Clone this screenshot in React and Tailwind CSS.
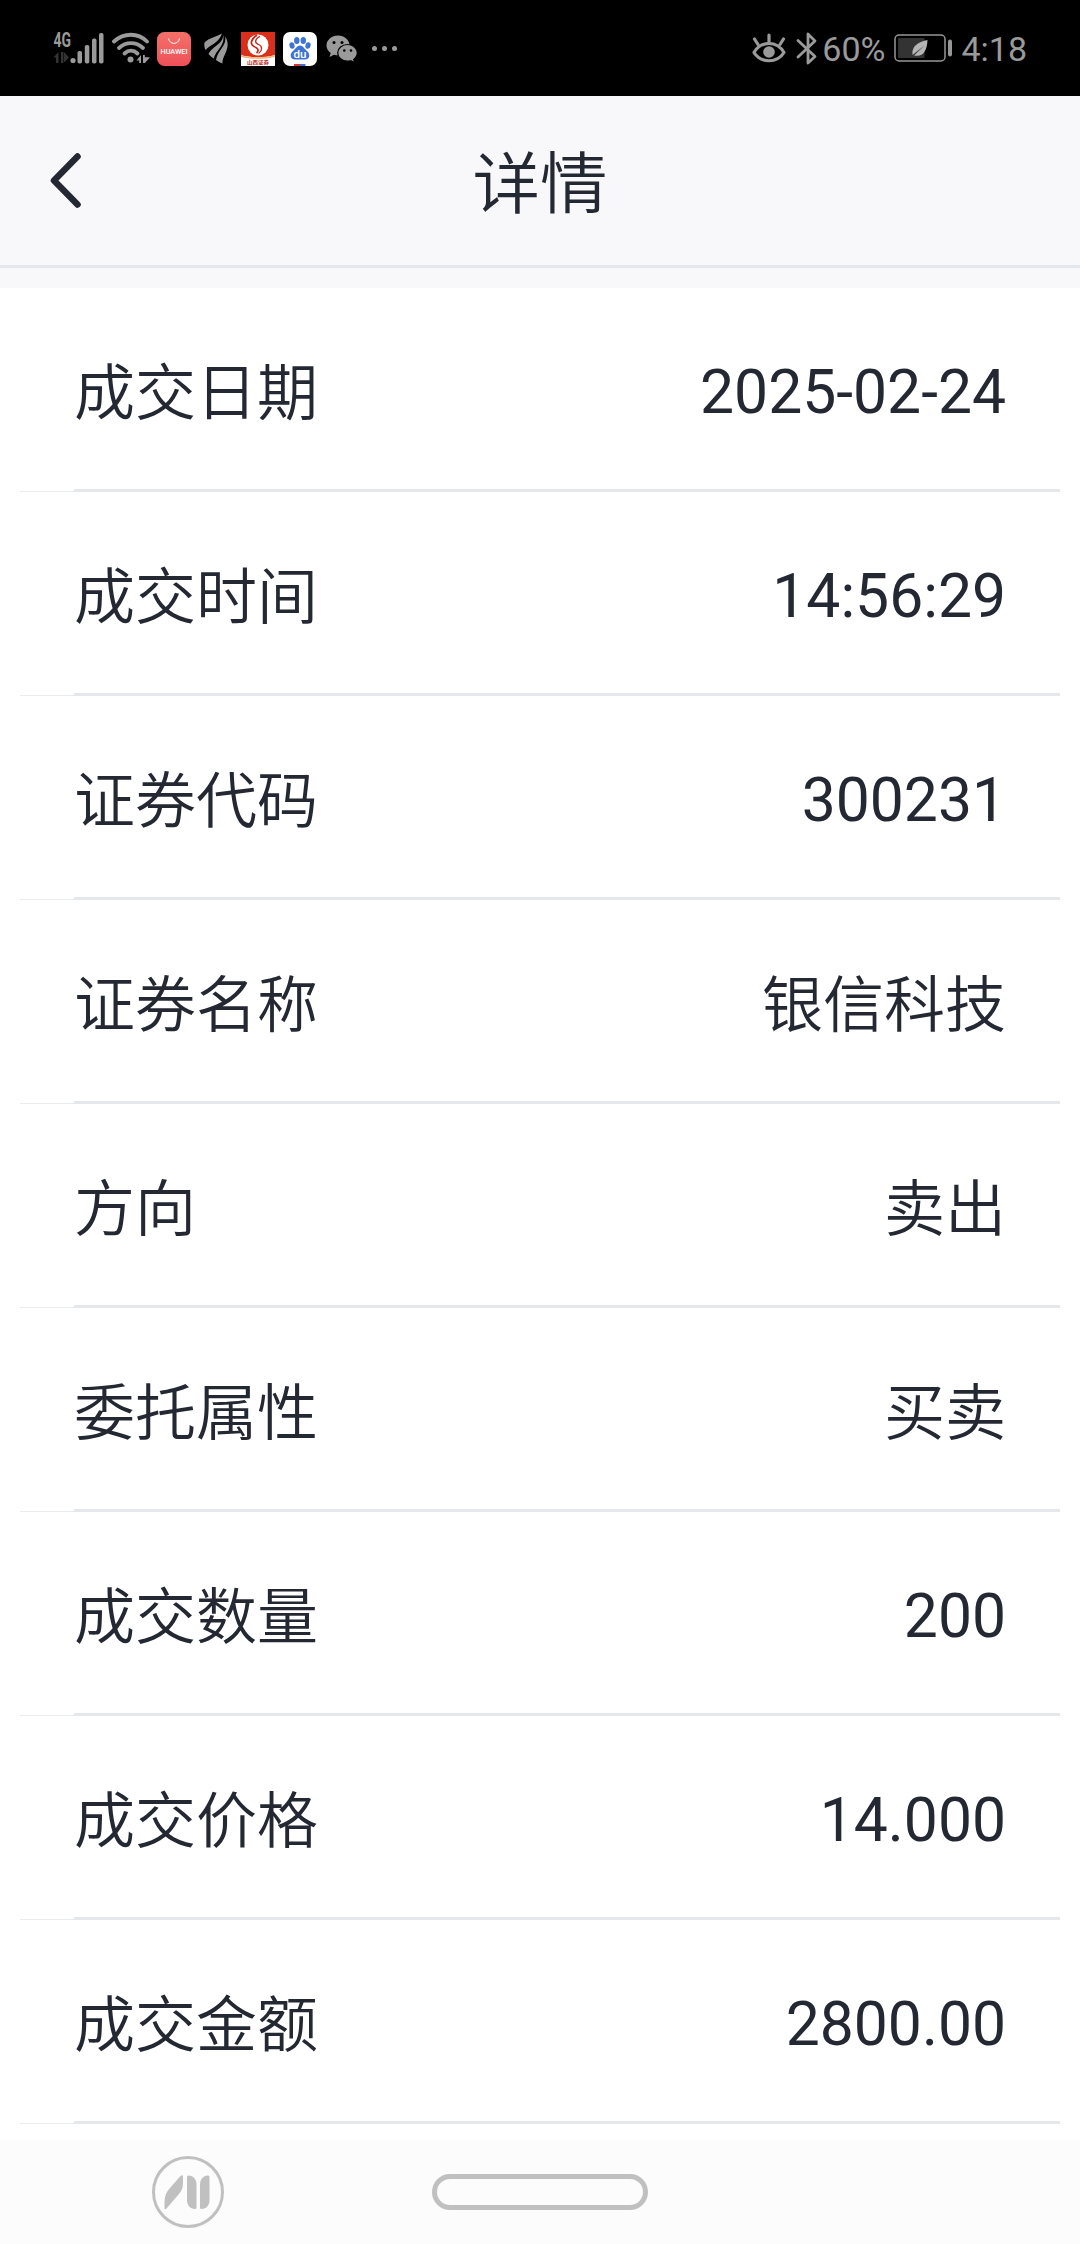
import React from 'react';

const rows = [
    { label: '成交日期', value: '2025-02-24' },
    { label: '成交时间', value: '14:56:29' },
    { label: '证券代码', value: '300231' },
    { label: '证券名称', value: '银信科技' },
    { label: '方向', value: '卖出' },
    { label: '委托属性', value: '买卖' },
    { label: '成交数量', value: '200' },
    { label: '成交价格', value: '14.000' },
    { label: '成交金额', value: '2800.00' },
];

const SignalIcon = () => (
    <svg width="52" height="40" viewBox="0 0 52 40" fill="#9a9a9a">
        <text x="0.5" y="18.500" fontSize="19.500" fontWeight="700" textLength="17.500" lengthAdjust="spacingAndGlyphs">4G</text>
        <path d="M0.500 29.500 5.500 24v11H3v-5.500zM8 24h2.400v11H8zM11 24l5 5.500-5 5z" fill="#333" />
        <circle cx="20" cy="32.500" r="2.600" />
        <rect x="24.500" y="23" width="4.500" height="12.500" rx="1.800" />
        <rect x="31.800" y="17" width="4.500" height="18.500" rx="1.800" />
        <rect x="39" y="10.500" width="4.500" height="25" rx="1.800" />
        <rect x="46" y="5" width="4.500" height="30.500" rx="1.800" />
    </svg>
);

const WifiIcon = () => (
    <svg width="38" height="40" viewBox="0 0 38 40" fill="none" stroke="#9a9a9a" strokeWidth="3.800" strokeLinecap="round">
        <path d="M2 13.500C12 4.500 26 4.500 35 13.500" />
        <path d="M7 20c7-6.500 17-6.500 24 0" />
        <path d="M12.500 25.500c4-3.800 9-3.800 13 0" />
        <circle cx="18.500" cy="31.500" r="3" fill="#9a9a9a" stroke="none" />
        <path d="M24.500 32.500 29 27v8h-1.800v-2.500zM31 27h1.800v2.200H38L33 35h-2z" fill="#9a9a9a" stroke="none" />
    </svg>
);

const HuaweiIcon = () => (
    <svg width="34" height="34" viewBox="0 0 34 34">
        <defs>
            <linearGradient id="hw" x1="0" y1="0" x2="0" y2="1">
                <stop offset="0" stopColor="#f47068" />
                <stop offset="1" stopColor="#ef5159" />
            </linearGradient>
        </defs>
        <rect width="34" height="34" rx="7.500" fill="url(#hw)" />
        <path d="M11.500 6.500c1 6.500 10 6.500 11 0" fill="none" stroke="#fff" strokeWidth="1" />
        <text x="3.500" y="22" fontSize="6.500" fontWeight="500" fill="#fff" textLength="27" lengthAdjust="spacingAndGlyphs">HUAWEI</text>
    </svg>
);

const WingIcon = () => (
    <svg width="26" height="40" viewBox="0 0 26 40" fill="#9a9a9a">
        <path d="M18 5.500C13 8.500 5 10 .5 14.500c-.5 3 0 5 1 7.500C5 17.500 15 15 18 5.500z" />
        <path d="M19 6.500c1 9-10 11-14.500 19.500C6.500 28 8 29.500 10 30.500 11 23 22 17 19 6.500z" />
        <path d="M21 8c2.500 9.500-7.500 14-9 24 2 1.500 4 2.500 6.500 3.500C17.500 28 28.500 20 21 8z" />
    </svg>
);

const BrokerIcon = () => (
    <svg width="34" height="34" viewBox="0 0 34 34">
        <rect width="34" height="34" fill="#fff" />
        <path d="M0 0h34v23c-10 3-24 3-34 0z" fill="#d9301c" />
        <path d="M0 23c10 3 24 3 34 0v2c-10 2.500-24 2.500-34 0z" fill="#f0b77a" />
        <circle cx="17" cy="13" r="10.500" fill="#fff" />
        <g fill="none" stroke="#c4281b" strokeLinecap="round">
            <path d="M15.500 3.500C9.500 7.500 9 12.500 13 14.500c4 1.500 5 3.500 3 6" strokeWidth="1.700" />
            <path d="M18.500 4.500c-5 3-5 6.500-1 8 4 1.500 4 6 .5 8.500" strokeWidth="1.300" />
        </g>
        <text x="6" y="32" fontSize="5" fontWeight="700" fill="#b3261b" textLength="22" lengthAdjust="spacingAndGlyphs">山西证券</text>
    </svg>
);

const BaiduIcon = () => (
    <svg width="34" height="34" viewBox="0 0 34 34">
        <rect width="34" height="34" rx="7" fill="#fff" />
        <g fill="#3d74d6">
            <ellipse cx="9" cy="13.500" rx="2.600" ry="3.300" transform="rotate(-12 9 13.500)" />
            <ellipse cx="13.800" cy="8.500" rx="2.700" ry="3.600" />
            <ellipse cx="20.300" cy="8.500" rx="2.700" ry="3.600" />
            <ellipse cx="25" cy="13.500" rx="2.600" ry="3.300" transform="rotate(12 25 13.500)" />
            <path d="M17 13.500c-3 0-4.500 3.500-7 5.500-4 3.500-2.500 8.500 2 8.500h10c4.500 0 6-5 2-8.500-2.500-2-4-5.500-7-5.500z" />
            <path d="M17 32h5.500v2H17z" />
        </g>
        <path d="M11 32h6v2h-6z" fill="#d33" />
        <text x="10.500" y="25.800" fontSize="11" fontWeight="500" fill="#fff" textLength="13" lengthAdjust="spacingAndGlyphs">du</text>
    </svg>
);

const WechatIcon = () => (
    <svg width="33" height="40" viewBox="0 0 33 40">
        <path d="M12 7.500C5.500 7.500.5 12 .5 17.500c0 3 1.700 5.800 4.200 7.600L3.500 29l4.600-2.300c1.300.4 2.500.6 3.900.6 6.500 0 11.500-4.500 11.500-9.900S18.500 7.500 12 7.500z" fill="#9a9a9a" />
        <path d="M21.500 16.500c-5.500 0-9.800 3.800-9.800 8.300s4.300 8.400 9.800 8.400c1.200 0 2.300-.2 3.300-.5l3.900 2-1-3.300c2.200-1.600 3.600-3.900 3.600-6.600 0-4.500-4.300-8.300-9.800-8.300z" fill="#9a9a9a" stroke="#000" strokeWidth="1.200" />
        <circle cx="8" cy="14.500" r="1.500" />
        <circle cx="16" cy="14.500" r="1.500" />
        <circle cx="18.300" cy="22.500" r="1.300" />
        <circle cx="25" cy="22.500" r="1.300" />
    </svg>
);

const EyeIcon = () => (
    <svg width="34" height="40" viewBox="0 0 34 40" fill="none" stroke="#9a9a9a" strokeWidth="3.200" strokeLinecap="round">
        <path d="M2 23.500C9 11.500 25 11.500 32 23.500 25 34.500 9 34.500 2 23.500z" strokeLinejoin="round" />
        <circle cx="17" cy="23" r="5.800" fill="#9a9a9a" stroke="none" />
        <path d="M17 13V6M6 15.500 2.500 10M28 15.500 31.500 10" />
    </svg>
);

const BluetoothIcon = () => (
    <svg width="22" height="40" viewBox="0 0 22 40" fill="none" stroke="#9a9a9a" strokeWidth="2.800" strokeLinecap="round" strokeLinejoin="round">
        <path d="M2 11.500 19 27.500 12 34V5l7 7L2 28" />
    </svg>
);

const BatteryIcon = () => (
    <svg width="59" height="40" viewBox="0 0 59 40">
        <rect x="1" y="6" width="50" height="26" rx="4" fill="none" stroke="#969696" strokeWidth="1.500" />
        <rect x="4" y="9" width="26.500" height="20" rx="1" fill="#333" />
        <rect x="54" y="10.500" width="4" height="17" rx="2" fill="#969696" />
        <path d="M33.500 11C24 13 17.500 17 18.500 26l12-9.500-10.500 10C29 28.500 33 22 33.500 11z" fill="#b4b4b4" />
    </svg>
);

const StatusBar = () => (
    <div className="flex h-24 items-center justify-between bg-black pl-[53px] pr-[53px] text-[#9a9a9a]">
        <div className="flex items-center">
            <SignalIcon />
            <div className="ml-[7px]"><WifiIcon /></div>
            <div className="ml-[7px] pt-0.5"><HuaweiIcon /></div>
            <div className="ml-[13px]"><WingIcon /></div>
            <div className="ml-[11px] pt-0.5"><BrokerIcon /></div>
            <div className="ml-2 pt-0.5"><BaiduIcon /></div>
            <div className="ml-[9px]"><WechatIcon /></div>
            <div className="ml-[13px] flex gap-[5px]">
                <span className="size-[5px] rounded-full bg-[#9a9a9a]" />
                <span className="size-[5px] rounded-full bg-[#9a9a9a]" />
                <span className="size-[5px] rounded-full bg-[#9a9a9a]" />
            </div>
        </div>
        <div className="flex items-center pt-0.5">
            <EyeIcon />
            <div className="ml-[10px]"><BluetoothIcon /></div>
            <span className="ml-[4px] text-[34px] leading-10">60%</span>
            <div className="ml-[9px]"><BatteryIcon /></div>
            <span className="ml-[8px] text-[34px] leading-10">4:18</span>
        </div>
    </div>
);

const Header = () => (
    <header className="flex h-[172px] items-center border-b-[3px] border-[#e4e8ed] bg-[#f8f8fb] pl-12">
        <button className="w-9" aria-label="返回">
            <svg width="36" height="60" viewBox="0 0 36 60" fill="none" stroke="#242832" strokeWidth="6.500" strokeLinecap="round" strokeLinejoin="round">
                <path d="M29.500 5.500 6 29.500l23.500 24" />
            </svg>
        </button>
        <h1 className="flex-1 pr-[84px] pt-2 text-center text-[67.5px] font-[350] leading-none">详情</h1>
    </header>
);

const DetailRow = ({ label, value }) => (
    <div className="ml-5 mr-5 flex h-[204px] border-b border-[#e9ebee]">
        <div className="-mb-px ml-[54px] flex flex-1 items-center justify-between border-b-[3px] border-[#e4e8ec] pr-[54px] pt-[9px] text-[60.6px] leading-none">
            <span className="pt-0.5 text-[61px] font-[350] leading-none">{label}</span>
            {/* digits stay regular, Chinese values use the lighter cut */}
            {/[\u4e00-\u9fa5]/.test(value)
                ? <span className="pt-0.5 text-[61px] font-[350] leading-none">{value}</span>
                : <span>{value}</span>}
        </div>
    </div>
);

const NavBar = () => (
    <nav className="flex h-[104px] items-center bg-[#fcfcfc] pl-[152px]">
        <svg width="72" height="72" viewBox="0 0 72 72" fill="#c0c0c0">
            <circle cx="36" cy="36" r="34.500" fill="none" stroke="#c0c0c0" strokeWidth="3" />
            <path d="M12.500 52.500V46c0-6 2-10 5-13.500l11-12.500c1-1 2.500-1 2.500.5V26c0 6-1 8.500-4.500 12.500L14.500 52.500c-1 1-2 1-2 0z" />
            <path d="M35 21q0-1.500 1.500-1.500c5 0 8 4 8 9V51.500q0 1.500-1.500 1.500c-5 0-8-4-8-9z" />
            <path d="M57.500 21q0-1.500-1.500-1.500c-5 0-8 4-8 9V51.500q0 1.500 1.500 1.500c5 0 8-4 8-9z" />
        </svg>
        <div className="ml-[208px] h-9 w-[216px] rounded-full border-[5px] border-[#c0c0c0]" />
    </nav>
);

const App = () => {
    return (
        <div className="flex h-[2244px] w-[1080px] flex-col overflow-hidden bg-white font-[Roboto,'Noto_Sans_CJK_SC',sans-serif] text-[#242832]" lang="zh-CN">
            <StatusBar />
            <Header />
            <main className="flex-1 border-t-[20px] border-[#f8f8fb]">
                {rows.map((row) => (
                    <DetailRow key={row.label} label={row.label} value={row.value} />
                ))}
            </main>
            <NavBar />
        </div>
    );
};

export default App;
